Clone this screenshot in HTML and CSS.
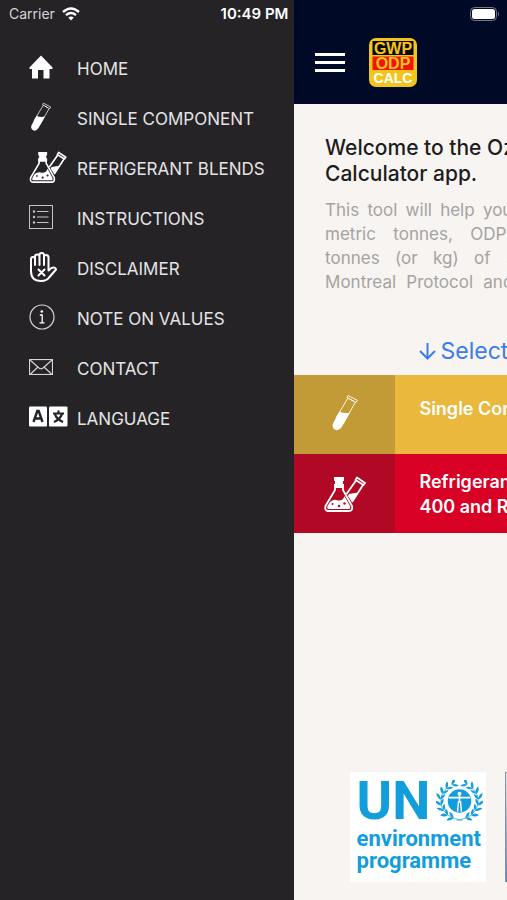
FILE: index.html
```
<!DOCTYPE html>
<html lang="en">
<head>
<meta charset="utf-8">
<meta name="viewport" content="width=device-width, initial-scale=1">
<title>GWP ODP Calculator</title>
<link rel="stylesheet" href="styles.css">
</head>
<body>
	<!-- shared icons -->
	<svg class="sprite" aria-hidden="true">
		<symbol id="tube" viewBox="0 0 26 38">
			<path d="M16 1.500L25.300 6.300L24 8.500L15 3.500ZM16 4L4 24M23.500 8L11 30M17.500 5L22 7.500" fill="none" stroke="currentColor" stroke-width="0.900"/>
			<path d="M7.500 17.500Q12 20 18 18.500L9.800 33Q6.500 38 2.500 35.500Q-0.500 33 1 29.500Z" fill="currentColor"/>
		</symbol>
		<symbol id="flask" viewBox="0 0 42 36">
			<g fill="none" stroke="currentColor" stroke-width="1.800" stroke-linejoin="round">
				<path d="M11 9V14L1.500 30Q0.500 35 4 35H25Q29 35 28 30L19 14V9"/>
				<path d="M33 1.500L41 7L39.500 9L31.500 4Z"/>
				<path d="M32 4.500L22.500 18M39 9L28 26"/>
			</g>
			<path d="M10 1H20V5H19V8H20V12H10V8H11V5H10Z" fill="currentColor"/>
			<path d="M6 26Q10 22.500 14 24.500Q19 25 20.500 20L26 30Q27 33 24.500 33H5Q2.500 33 3.500 30Z" fill="currentColor"/>
			<path d="M25 18L34 16.500L28 26L24 20Z" fill="currentColor"/>
			<g class="bubbles"><circle cx="8.500" cy="28" r="1"/><circle cx="15" cy="30" r="1.200"/><circle cx="20.500" cy="27.500" r="1.200"/></g>
		</symbol>
	</svg>

	<div class="statusbar">
		<div class="carrier">
			<span>Carrier</span>
			<svg width="18" height="14" viewBox="0 0 18 14"><g fill="none" stroke="#fff" stroke-width="2.400"><path d="M1 5Q9 -2 17 5"/><path d="M4 8.200Q9 4 14 8.200"/></g><path d="M6.300 10.500Q9 8.500 11.700 10.500L9 13.500Z" fill="#fff"/></svg>
		</div>
		<div class="clock">10:49 PM</div>
		<svg class="battery" width="30" height="14" viewBox="0 0 30 14"><rect x="0.500" y="0.500" width="26" height="13" rx="4" fill="none" stroke="#77798b"/><rect x="2" y="2" width="23" height="10" rx="2.500" fill="#fff"/><path d="M28 4.500Q30 7 28 9.500Z" fill="#77798b"/></svg>
	</div>

	<nav class="sidebar">
		<a href="#home">
			<span class="icon"><svg width="24" height="24" viewBox="0 0 24 24"><path d="M12 0.500L0.500 12.500V14H3V23.500H9V15H14.500V23.500H20.500V14H23.500V12.500Z" fill="#fff"/></svg></span>
			HOME
		</a>
		<a href="#single">
			<span class="icon"><svg width="24" height="30"><use href="#tube"/></svg></span>
			SINGLE COMPONENT
		</a>
		<a href="#blends">
			<span class="icon"><svg width="38" height="32"><use href="#flask"/></svg></span>
			REFRIGERANT BLENDS
		</a>
		<a href="#instructions">
			<span class="icon"><svg width="24" height="24" viewBox="0 0 24 24"><g fill="none" stroke="#c4c3c5"><rect x="0.500" y="0.500" width="23" height="23"/><path d="M8 6.500H19.500M8 12H19.500M8 17.500H19.500" stroke-width="1.200"/></g><g fill="#c4c3c5"><circle cx="5" cy="6.500" r="1.200"/><circle cx="5" cy="12" r="1.200"/><circle cx="5" cy="17.500" r="1.200"/></g></svg></span>
			INSTRUCTIONS
		</a>
		<a href="#disclaimer">
			<span class="icon"><svg width="28" height="30" viewBox="0 0 28 30"><g fill="none" stroke="#fff" stroke-width="2" stroke-linejoin="round" stroke-linecap="round"><path d="M2 18V7Q2 5 4 5Q6 5 6 7V13M6 7V4.500Q6 2.500 8.200 2.500Q10.500 2.500 10.500 4.500V13M10.500 4V3Q10.500 1 12.700 1Q15 1 15 3V13M15 5Q15 3 17 3Q19.500 3 19.500 5.500V18.500L22.500 16Q26.500 14.500 27 17.500L20.500 25Q18 29 12 29Q2 29 2 19V15"/><path d="M9.500 17.500L15.500 23.500M15.500 17.500L9.500 23.500"/></g></svg></span>
			DISCLAIMER
		</a>
		<a href="#note">
			<span class="icon"><svg width="26" height="26" viewBox="0 0 26 26"><circle cx="13" cy="13" r="12" fill="none" stroke="#d4d3d5" stroke-width="1.200"/><circle cx="12.800" cy="7.500" r="1.300" fill="#fff"/><path d="M10.800 11H13.200V18.500M10.500 18.800H15.500" fill="none" stroke="#fff" stroke-width="1.300"/></svg></span>
			NOTE ON VALUES
		</a>
		<a href="#contact">
			<span class="icon"><svg width="24" height="16" viewBox="0 0 24 16"><g fill="none" stroke="#d4d3d5" stroke-width="1.200"><rect x="0.500" y="0.500" width="23" height="15"/><path d="M1 1L10 9Q12 10.500 14 9L23 1M1.500 15L9 8M22.500 15L15 8"/></g></svg></span>
			CONTACT
		</a>
		<a href="#language">
			<span class="icon"><svg width="39" height="21" viewBox="0 0 39 21"><rect y="0.500" width="18" height="20" rx="1" fill="#fff"/><rect x="20" y="0.500" width="18.500" height="20" rx="1" fill="#fff"/><path d="M4.500 16L8.300 5H9.700L13.500 16M6 12.500H12" fill="none" stroke="#252326" stroke-width="2.400"/><path d="M24 7.500H35M29.500 4.500V7.500M33 8Q31 13.500 25 16M26 8.500Q28 13.500 34 16" fill="none" stroke="#252326" stroke-width="2.200"/></svg></span>
			LANGUAGE
		</a>
	</nav>

	<div class="page">
		<header class="topbar">
			<button class="menu-btn" aria-label="Menu"><span></span><span></span><span></span></button>
			<svg class="applogo" width="48" height="49" viewBox="0 0 48 49">
				<rect width="48" height="49" rx="7" fill="#f3c51c"/>
				<rect x="3.500" y="3" width="41" height="14" fill="#0b0a08"/>
				<rect x="3.500" y="18.500" width="41" height="13.500" fill="#f5120a"/>
				<g text-anchor="middle"><text x="24" y="16" fill="#f3c51c">GWP</text><text x="24" y="31" fill="#f3c51c">ODP</text><text class="calc" x="24" y="45" fill="#fff">CALC</text></g>
			</svg>
		</header>
		<div class="intro">
			<h1>Welcome to the Ozone Unit<br>Calculator app.</h1>
			<p>This tool will help you to convert quantities between<br>metric tonnes, ODP tonnes and CO2-equivalent<br>tonnes (or kg) of substances controlled by the<br>Montreal Protocol and other fluorinated substances.</p>
		</div>
		<div class="select">
			<svg width="17" height="18" viewBox="0 0 17 18"><path d="M8.500 1V16M1 9L8.500 16.500L16 9" fill="none" stroke="#3b7de9" stroke-width="2"/></svg>
			Select calculator type
		</div>
		<a class="option single" href="#single">
			<span class="pic"><svg width="26" height="38"><use href="#tube"/></svg></span>
			<span class="label">Single Component</span>
		</a>
		<a class="option blends" href="#blends">
			<span class="pic"><svg width="42" height="36"><use href="#flask"/></svg></span>
			<span class="label">Refrigerant Blends (R-<br>400 and R-500 series)</span>
		</a>
		<footer class="partners">
			<div class="unep">
				<div class="top">
					<span class="un">UN</span>
					<svg width="47" height="42" viewBox="0 0 48 42" fill="#129ddc">
						<defs>
							<g id="leaf"><path d="M0 0Q-4 -1 -5 -6Q0 -5 0 0ZM0 0Q4 -2 4 -6Q0 -5 0 0Z"/></g>
							<g id="branch">
								<use href="#leaf" transform="translate(18 38) rotate(-70)"/>
								<use href="#leaf" transform="translate(12 35.500) rotate(-50)"/>
								<use href="#leaf" transform="translate(8 31) rotate(-30)"/>
								<use href="#leaf" transform="translate(5 25.500) rotate(-12)"/>
								<use href="#leaf" transform="translate(4.500 19.500) rotate(8)"/>
								<use href="#leaf" transform="translate(6.500 13.500) rotate(28)"/>
								<use href="#leaf" transform="translate(10.500 8.500) rotate(46)"/>
								<use href="#leaf" transform="translate(16 4.500) rotate(64)"/>
								<path d="M27 41Q8 38 5 24Q4 12 12 7" fill="none" stroke="#129ddc" stroke-width="0.700"/>
							</g>
						</defs>
						<use href="#branch"/>
						<use href="#branch" transform="translate(48 0) scale(-1 1)"/>
						<circle cx="24" cy="21" r="12"/>
						<g stroke="#fff" fill="none"><path d="M13 17.500H35M24 14V23" stroke-width="1.700"/><path d="M23 21L22 32M25 21L26 32" stroke-width="1.500"/></g>
						<circle cx="24" cy="13.500" r="2" fill="#fff"/>
					</svg>
				</div>
				<div class="words">environment<br>programme</div>
			</div>
			<div class="partner"></div>
		</footer>
	</div>
</body>
</html>
```
FILE: styles.css
```
*{
	margin: 0;
	padding: 0;
	box-sizing: border-box;
}
html {
	overflow: hidden;
}
body {
	display: flex;
	height: 100vh;
	overflow: hidden;
	position: relative;
	background-color: #252326;
	font-family: Inter, "Liberation Sans", sans-serif;
}
svg {
	display: block;
	flex-shrink: 0;
}
a {
	text-decoration: none;
}
.sprite {
	position: absolute;
	width: 0;
	height: 0;
}
/* phone status bar, lies over menu and page */
.statusbar {
	position: absolute;
	top: 0;
	left: 0;
	right: 0;
	z-index: 2;
	display: grid;
	grid-template-columns: 1fr auto 1fr;
	align-items: center;
	height: 27px;
	padding: 0 7px 0 9px;
	color: #fff;
	font-size: 14px;
}
.carrier {
	display: flex;
	align-items: center;
	gap: 7px;
	color: #d6d5d7;
}
.clock {
	font-size: 15px;
	font-weight: 600;
}
.battery {
	justify-self: end;
}
/* side menu */
.sidebar {
	flex: 0 0 58%;
	padding-top: 44px;
	background-color: #252326;
}
.sidebar a {
	display: flex;
	align-items: center;
	gap: 8px;
	height: 50px;
	padding-left: 29px;
	color: #e4e3e5;
	font-size: 17px;
}
.icon {
	width: 40px;
	padding-bottom: 5px;
	color: #fff;
}
.bubbles {
	fill: var(--bubble, #252326);
}
/* page pushed to the right by the menu */
.page {
	flex: 0 0 100%;
	display: flex;
	flex-direction: column;
	background-color: #f8f4f1;
}
.topbar {
	display: flex;
	align-items: center;
	gap: 24px;
	height: 104px;
	padding: 20px 21px 0;
	background-color: #000a26;
}
.menu-btn {
	display: flex;
	flex-direction: column;
	gap: 5px;
	width: 30px;
	border: 0;
	background: none;
}
.menu-btn span {
	width: 30px;
	height: 3px;
	background-color: #fff;
}
.applogo text {
	font: bold 16px "Liberation Sans", sans-serif;
}
.applogo .calc {
	font-size: 14px;
}
.intro {
	padding: 31px 31px 0;
}
.intro h1 {
	color: #1d1c1e;
	font-size: 21px;
	font-weight: 500;
	line-height: 26px;
}
.intro p {
	margin-top: 11px;
	color: #a5a3a2;
	font-size: 17px;
	line-height: 24px;
	text-align: justify;
	text-align-last: justify;
}
.select {
	display: flex;
	justify-content: center;
	align-items: center;
	gap: 5px;
	padding: 42px 0 9px;
	color: #3b7de9;
	font-size: 23px;
	line-height: 30px;
}
.option {
	display: flex;
	height: 79px;
	color: #fff;
	font-size: 18px;
	font-weight: 600;
	line-height: 25px;
}
.pic {
	display: flex;
	justify-content: center;
	align-items: center;
	width: 20%;
}
.label {
	padding: 21px 24px 0;
}
.single {
	background-color: #eab83d;
}
.single .pic {
	padding-bottom: 4px;
	background-color: #c39b36;
}
.blends {
	--bubble: #b00825;
	background-color: #d90025;
}
.blends .pic {
	background-color: #b00825;
}
.blends .label {
	padding-top: 15px;
}
.partners {
	display: flex;
	justify-content: center;
	gap: 19px;
	margin-top: auto;
	padding-bottom: 18px;
}
.unep {
	width: 136px;
	height: 110px;
	padding: 8px 0 0 7px;
	background-color: #fff;
	color: #129ddc;
	font-family: Roboto, sans-serif;
	font-weight: bold;
}
.top {
	display: flex;
	gap: 6px;
}
.un {
	font-size: 54px;
	line-height: 42px;
}
.words {
	margin-top: 6px;
	font-size: 22px;
	line-height: 22px;
}
.partner {
	width: 241px;
	border: 1px solid #8d8f98;
	background: linear-gradient(#e8ebf0, #5f7fae);
}
```
